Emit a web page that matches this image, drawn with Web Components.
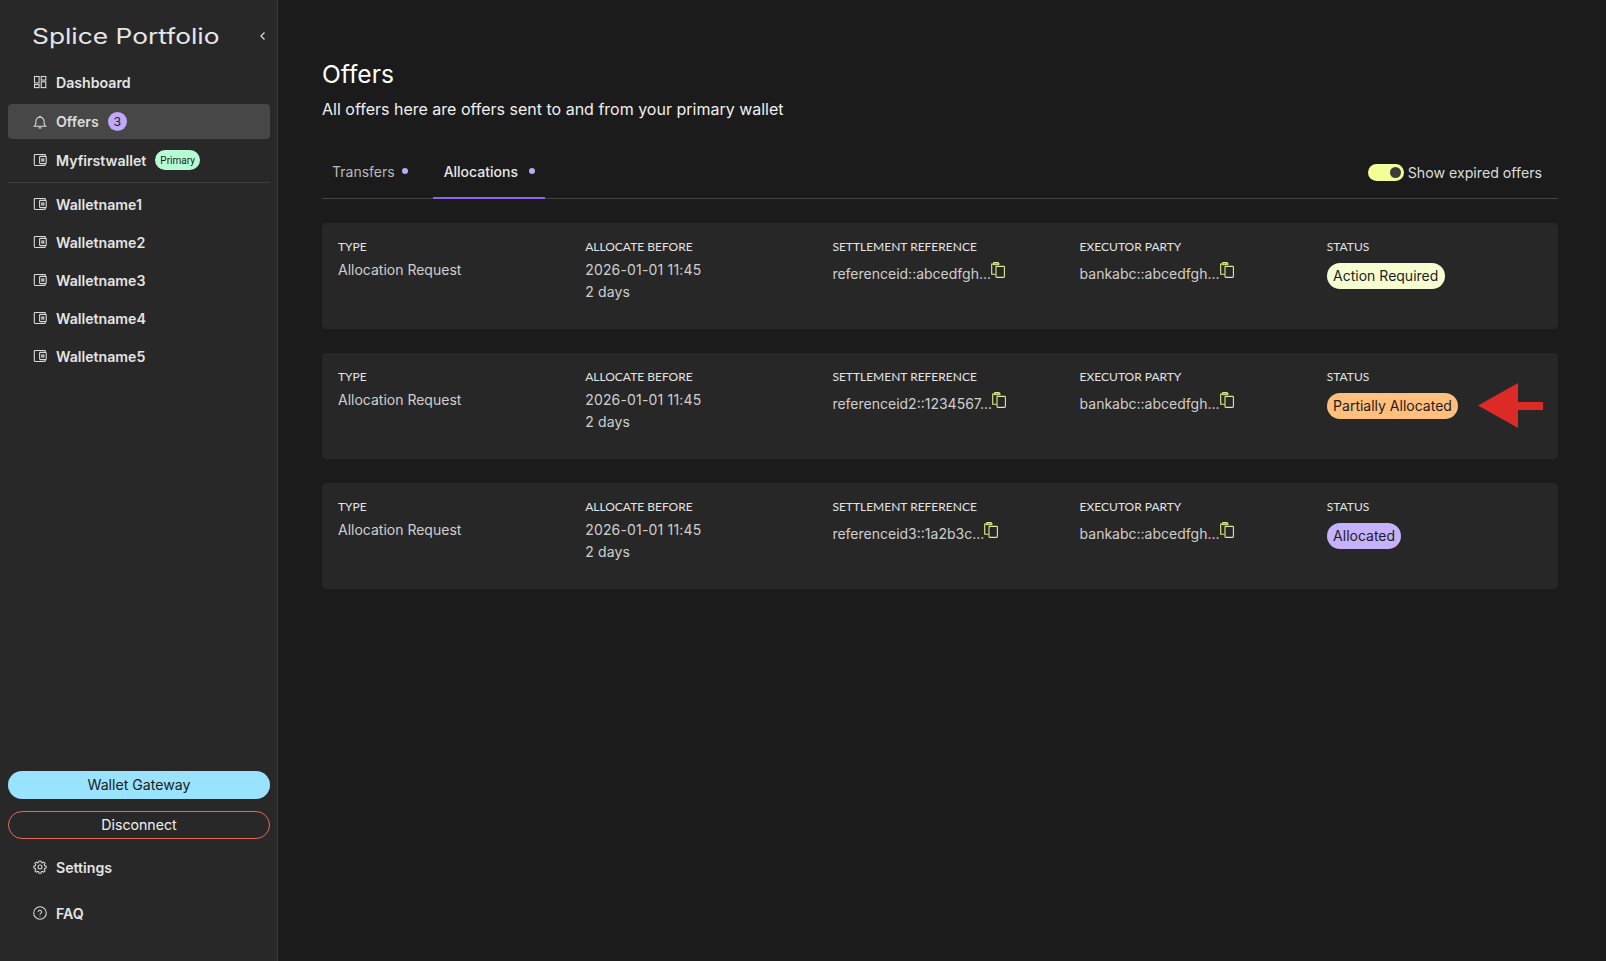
<!DOCTYPE html>
<html lang="en">
<head>
<meta charset="utf-8">
<title>Offers</title>
<style>
  html,body{margin:0;height:100%;background:#1b1b1b}
  body{font-family:'Inter',sans-serif;color:#fff}
  #app{display:flex;height:961px;overflow:hidden}
</style>
</head>
<body>
<template id="ic-wallet"><svg viewBox="0 0 14 14" fill="none" stroke="currentColor" stroke-width="1.1"><path d="M12.4 3.2V2.4a.9.9 0 0 0-.9-.9H2.2a.9.9 0 0 0-.9.9v9.2c0 .5.4.9.9.9h9.3a.9.9 0 0 0 .9-.9v-.8"/><rect x="6.6" y="3.4" width="6.6" height="7.2" rx=".8"/><rect x="8.8" y="6" width="2" height="2"/></svg></template>

<div id="app">
  <app-sidebar>
    <nav-item icon="dash">Dashboard</nav-item>
    <nav-item icon="bell" active>Offers <count-badge>3</count-badge></nav-item>
    <nav-item icon="wallet">Myfirstwallet <primary-tag>Primary</primary-tag></nav-item>
    <nav-rule></nav-rule>
    <nav-item icon="wallet">Walletname1</nav-item>
    <nav-item icon="wallet">Walletname2</nav-item>
    <nav-item icon="wallet">Walletname3</nav-item>
    <nav-item icon="wallet">Walletname4</nav-item>
    <nav-item icon="wallet">Walletname5</nav-item>
    <pill-button slot="footer" kind="fill">Wallet Gateway</pill-button>
    <pill-button slot="footer" kind="line">Disconnect</pill-button>
    <nav-item slot="bottom" icon="gear">Settings</nav-item>
    <nav-item slot="bottom" icon="help">FAQ</nav-item>
  </app-sidebar>
  <offers-page>
    <offer-card ref="referenceid::abcedfgh..." status="Action Required" tone="action"></offer-card>
    <offer-card ref="referenceid2::1234567..." status="Partially Allocated" tone="partial" arrow></offer-card>
    <offer-card ref="referenceid3::1a2b3c..." status="Allocated" tone="done"></offer-card>
  </offers-page>
</div>

<script>
const ICONS = {
  dash: '<svg viewBox="0 0 14 14" fill="none" stroke="currentColor" stroke-width="1.1"><rect x="1.5" y="1.5" width="4.6" height="6.4"/><rect x="8.2" y="1.5" width="4.6" height="3.6"/><rect x="1.5" y="9.6" width="4.6" height="3"/><rect x="8.2" y="6.8" width="4.6" height="5.8"/></svg>',
  bell: '<svg viewBox="0 0 14 14" fill="none" stroke="currentColor" stroke-width="1.1"><path d="M1.4 11.2h11.2c-1-.9-1.5-1.9-1.5-3.4V6.2A4.1 4.1 0 0 0 2.9 6.2v1.6c0 1.500-.5 2.500-1.500 3.400z"/><path d="M7 2V.8M5.600 12.900h2.800"/></svg>',
  wallet: document.getElementById("ic-wallet").innerHTML,
  gear: '<svg viewBox="0 0 24 24" fill="none" stroke="currentColor" stroke-width="1.800" stroke-linejoin="round"><path d="M10.300 2.600h3.400l.6 2.700 1.700.7 2.300-1.500 2.400 2.400-1.500 2.300.7 1.700 2.700.6v3.400l-2.700.6-.7 1.700 1.500 2.300-2.400 2.400-2.300-1.500-1.700.7-.6 2.700h-3.400l-.6-2.700-1.700-.7-2.300 1.500-2.400-2.400 1.500-2.300-.7-1.700-2.700-.6v-3.400l2.700-.6.7-1.700-1.500-2.300 2.400-2.400 2.300 1.500 1.700-.7z" transform="translate(0 -1)"/><circle cx="12" cy="12" r="3.400"/></svg>',
  help: '<svg viewBox="0 0 24 24" fill="none" stroke="currentColor" stroke-width="1.800" stroke-linecap="round"><circle cx="12" cy="12" r="10.800"/><path d="M9 9.300a3 3 0 0 1 5.800 1c0 2-2.800 2.400-2.800 4"/><path d="M12 17.600h.01"/></svg>'
};

class AppSidebar extends HTMLElement {
  connectedCallback() {
    if (this.shadowRoot) return;
    this.attachShadow({ mode: "open" }).innerHTML = `
      <style>
        :host{display:flex;flex-direction:column;box-sizing:border-box;flex:none;width:278px;height:961px;background:#282828;border-right:1px solid #3a3a3a;padding:0 7px 0 8px}
        .brand{display:flex;align-items:center;justify-content:space-between;height:55px;margin-top:8px;padding:0 2px 0 24px}
        .brand span{font:400 21.500px 'Inter',sans-serif;color:#e6e6e6;transform:scaleX(1.224);transform-origin:left center;white-space:nowrap}
        .brand svg{width:10px;height:10px;color:#cfcfcf}
        nav{display:flex;flex-direction:column}
        .grow{flex:1}
        .foot{display:flex;flex-direction:column;gap:12px}
        .bottom{display:flex;flex-direction:column;gap:8px;margin-top:9px;padding-bottom:29px}
      </style>
      <div class="brand"><span>Splice Portfolio</span><svg viewBox="0 0 10 10" fill="none" stroke="currentColor" stroke-width="1.400"><path d="M6.500 1.500L3 5l3.500 3.500"/></svg></div>
      <nav><slot></slot></nav>
      <div class="grow"></div>
      <div class="foot"><slot name="footer"></slot></div>
      <div class="bottom"><slot name="bottom"></slot></div>`;
  }
}

class NavItem extends HTMLElement {
  connectedCallback() {
    if (this.shadowRoot) return;
    const icon = ICONS[this.getAttribute("icon")] || "";
    this.attachShadow({ mode: "open" }).innerHTML = `
      <style>
        :host{display:flex;align-items:center;box-sizing:border-box;height:38px;padding-left:25px;gap:9px;border-radius:4px;font:600 14.150px 'Inter',sans-serif;color:#e4e4e4}
        :host([active]){background:#474747;height:35px;margin:3px 0 2px;color:#dcdcdc}
        svg{width:14px;height:14px;display:block}
        .ic{width:14px;height:14px;flex:none;color:#dadada}
        .t{display:flex;align-items:center;gap:9px;white-space:nowrap}
      </style>
      <span class="ic">${icon}</span><span class="t"><slot></slot></span>`;
  }
}

class CountBadge extends HTMLElement {
  connectedCallback() {
    if (this.shadowRoot) return;
    this.attachShadow({ mode: "open" }).innerHTML = `
      <style>:host{display:inline-grid;place-items:center;width:19px;height:19px;border-radius:50%;background:#c0a9fb;color:#1c1c1c;font:400 12.300px 'Inter',sans-serif}</style><slot></slot>`;
  }
}

class PrimaryTag extends HTMLElement {
  connectedCallback() {
    if (this.shadowRoot) return;
    this.attachShadow({ mode: "open" }).innerHTML = `
      <style>:host{display:inline-flex;align-items:center;height:20px;padding:0 5px;border-radius:10px;background:#b5fbd3;color:#1c1c1c;font:400 10px 'Roboto',sans-serif}</style><slot></slot>`;
  }
}

class NavRule extends HTMLElement {
  connectedCallback() {
    if (this.shadowRoot) return;
    this.attachShadow({ mode: "open" }).innerHTML = `
      <style>:host{display:block;height:1px;background:#3d3d3d;margin:3px 0 2px}</style>`;
  }
}

class PillButton extends HTMLElement {
  connectedCallback() {
    if (this.shadowRoot) return;
    this.attachShadow({ mode: "open" }).innerHTML = `
      <style>
        :host{display:flex;align-items:center;justify-content:center;box-sizing:border-box;height:28px;padding-bottom:2px;border-radius:14px;font:400 14.150px 'Inter',sans-serif}
        :host([kind=fill]){background:#99e3ff;color:#1b1b1b}
        :host([kind=line]){border:1px solid #e8695a;color:#f0f0f0}
      </style><slot></slot>`;
  }
}

class OffersPage extends HTMLElement {
  connectedCallback() {
    if (this.shadowRoot) return;
    this.attachShadow({ mode: "open" }).innerHTML = `
      <style>
        :host{display:block;flex:1;box-sizing:border-box;padding:58px 48px 0 44px;min-width:0}
        h1{margin:0;font:400 24.600px/32px 'Inter',sans-serif;color:#fff}
        p{margin:7px 0 0;font:400 16px/24px 'Inter',sans-serif;color:#f0f0f0}
        .tabs{display:flex;align-items:stretch;height:51px;margin-top:26px;border-bottom:1px solid #444;font-size:14px}
        .tab{display:flex;align-items:center;gap:7px;padding:0 10px 4px;color:#b9b9b9;margin-bottom:-1px}
        .tab.on{color:#e8e8e8;font-weight:500;gap:11px;margin-left:15px;border-bottom:2px solid #8b64ee;height:52px;box-sizing:border-box;padding:0 10px 2px 11px}
        .dot{width:6px;height:6px;border-radius:50%;background:#c0a9fb}
        .sw{margin-left:auto;display:flex;align-items:center;gap:4px;padding-right:16px;color:#dcdcdc;font-size:14.200px}
        .track{width:36px;height:17px;border-radius:9px;background:#f3ff97;position:relative}
        .track i{position:absolute;right:3px;top:3px;width:11px;height:11px;border-radius:50%;background:#3c3c3c}
        .list{display:flex;flex-direction:column;gap:24px;margin-top:24px}
      </style>
      <h1>Offers</h1>
      <p>All offers here are offers sent to and from your primary wallet</p>
      <div class="tabs">
        <div class="tab">Transfers <span class="dot"></span></div>
        <div class="tab on">Allocations <span class="dot"></span></div>
        <div class="sw"><span class="track"><i></i></span>Show expired offers</div>
      </div>
      <div class="list"><slot></slot></div>`;
  }
}

const COPY = '<svg class="cp" viewBox="0 0 14 16" fill="none" stroke="#e2ec8d" stroke-width="1.100"><path d="M8.800 2H.7v10.300h4"/><rect x="2.400" y=".6" width="5" height="2.200" rx=".7"/><rect x="5" y="4.400" width="8.400" height="11" rx=".8"/></svg>';

class OfferCard extends HTMLElement {
  connectedCallback() {
    if (this.shadowRoot) return;
    const ref = this.getAttribute("ref");
    const status = this.getAttribute("status");
    const tone = this.getAttribute("tone");
    const arrow = this.hasAttribute("arrow") ? '<svg class="arrow" viewBox="0 0 65 45"><path fill="#dd2a27" d="M0 22.500L40 0V19H65V27H40V45z"/></svg>' : "";
    this.attachShadow({ mode: "open" }).innerHTML = `
      <style>
        :host{display:grid;grid-template-columns:repeat(5,1fr);gap:32px;position:relative;box-sizing:border-box;height:106px;padding:16px;background:#272727;border-radius:4px;font:400 14px/22px 'Inter',sans-serif;color:#cfcfcf}
        h4{margin:0 0 2px;font:400 12px/15px 'Lato',sans-serif;color:#e4e4e4;text-transform:uppercase}
        .v{margin-top:5px}
        .d{letter-spacing:.17px}
        .c{display:flex;align-items:flex-start;margin-top:4px;white-space:nowrap}
        .c span{padding-top:5px}
        .cp{width:14px;height:16px;flex:none;margin:4px 0 0 0}
        .pill{display:inline-flex;align-items:center;height:26px;padding:0 6.300px;border-radius:13px;margin-top:7px;color:#1c1c1c}
        .action{background:#f5ffd2}.partial{background:#ffbf7d}.done{background:#c6b1fb}
        .arrow{position:absolute;left:1156px;top:30px;width:65px;height:45px}
      </style>
      <div><h4>Type</h4><div class="v">Allocation Request</div></div>
      <div><h4>Allocate before</h4><div class="v d">2026-01-01 11:45<br>2 days</div></div>
      <div><h4>Settlement reference</h4><div class="c"><span>${ref}</span>${COPY}</div></div>
      <div><h4>Executor party</h4><div class="c"><span>bankabc::abcedfgh...</span>${COPY}</div></div>
      <div><h4>Status</h4><div class="pill ${tone}">${status}</div></div>
      ${arrow}`;
  }
}

customElements.define("app-sidebar", AppSidebar);
customElements.define("nav-item", NavItem);
customElements.define("count-badge", CountBadge);
customElements.define("primary-tag", PrimaryTag);
customElements.define("nav-rule", NavRule);
customElements.define("pill-button", PillButton);
customElements.define("offers-page", OffersPage);
customElements.define("offer-card", OfferCard);
</script>
</body>
</html>
